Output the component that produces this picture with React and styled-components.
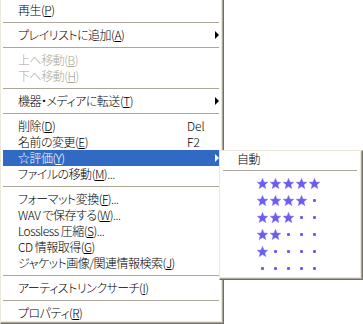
import * as React from 'react';
import styled, { createGlobalStyle, css } from 'styled-components';


const GlobalStyle = createGlobalStyle`
  html, body {
    margin: 0;
    padding: 0;
    background: #ffffff;
  }

  body {
    font-family: "Noto Sans CJK JP", "Noto Sans", sans-serif;
    font-size: 12px;
    font-weight: 300;
    font-feature-settings: "palt";
    letter-spacing: -0.5px;
    color: #000000;
  }
`;

const Page = styled.div`
  position: relative;
  width: 363px;
  height: 324px;
  overflow: hidden;
`;

const Menu = styled.div`
  box-sizing: border-box;
  width: 224px;
  height: 324px;
  display: flex;
  flex-direction: column;
  padding: 2px 4px 2px 2px;
  border-left: 1px solid #ece9d8;
  border-right: 1px solid #716f64;
  border-bottom: 1px solid #716f64;
  background: #ffffff;
  box-shadow: inset -1px -1px 0 #aca899, inset -2px -2px 0 #ece9d8;
`;

const Item = styled.div`
  flex-shrink: 0;
  height: 16px;
  display: flex;
  align-items: center;
  padding-left: 15px;
  line-height: 16px;
  white-space: nowrap;
  color: #000000;

  ${props => props.isDisabled && css`
    color: #aca899;
  `}

  ${props => props.isActive && css`
    background: #316ac5;
    color: #ffffff;
  `}
`;

const Label = styled.span`
  flex: 1;
`;

const Shortcut = styled.span`
  width: 22px;
  letter-spacing: 0;
`;

const ArrowCell = styled.span`
  width: 10px;
  height: 16px;
  display: flex;
  align-items: center;
  padding-left: 6px;
  box-sizing: border-box;
`;

const Arrow = styled.span`
  width: 0;
  height: 0;
  border-top: 4px solid transparent;
  border-bottom: 4px solid transparent;
  border-left: 4px solid currentColor;
`;

const Separator = styled.div`
  flex-shrink: 0;
  height: 9px;
  display: flex;
  flex-direction: column;
  padding-top: 4px;
  box-sizing: border-box;

  &::before {
    content: '';
    display: block;
    height: 1px;
    background: #aca899;
  }

  ${props => props.isInset && css`
    padding-left: 2px;
    padding-right: 2px;
  `}
`;

const SubMenu = styled.div`
  position: absolute;
  left: 219px;
  top: 150px;
  box-sizing: border-box;
  width: 144px;
  display: flex;
  flex-direction: column;
  padding: 1px 3px 2px 1px;
  border-top: 1px solid #ece9d8;
  border-left: 1px solid #ece9d8;
  border-right: 1px solid #716f64;
  border-bottom: 1px solid #716f64;
  background: #ffffff;
  box-shadow: inset -1px -1px 0 #aca899, inset -2px -2px 0 #ece9d8;
`;

const AutoItem = styled.div`
  height: 14px;
  line-height: 14px;
  padding-left: 16px;
`;

const RatingRow = styled.div`
  height: 17px;
  display: flex;
  align-items: center;
  gap: 2px;
  padding-left: 36px;
`;

const Cell = styled.span`
  width: 11px;
  height: 11px;
  display: flex;
  align-items: center;
  justify-content: center;
`;

const Dot = styled.span`
  width: 3px;
  height: 3px;
  border-radius: 1px;
  background: #6b5cf2;
`;


const Star = () => (
  <svg width={ 11 } height={ 11 } viewBox={ '0 0 10 10' }>
    <polygon
      points={ '5,0.2 6.4,3.6 9.95,3.8 7.2,6.1 8.1,9.7 5,7.8 1.9,9.7 2.8,6.1 0.05,3.8 3.6,3.6' }
      fill={ '#6b5cf2' }
      stroke={ '#8f84f6' }
      strokeWidth={ 0.4 }
    />
  </svg>
);

const Mnemonic = ({ text, mark, suffix }) => (
  <React.Fragment>
    { text }(<u>{ mark }</u>){ suffix }
  </React.Fragment>
);

const menuItems = [
  { text: '再生', mark: 'P' },
  { separator: true },
  { text: 'プレイリストに追加', mark: 'A', hasSubmenu: true },
  { separator: true },
  { text: '上へ移動', mark: 'B', isDisabled: true },
  { text: '下へ移動', mark: 'H', isDisabled: true },
  { separator: true },
  { text: '機器・メディアに転送', mark: 'T', hasSubmenu: true },
  { separator: true },
  { text: '削除', mark: 'D', shortcut: 'Del' },
  { text: '名前の変更', mark: 'E', shortcut: 'F2' },
  { text: '☆評価', mark: 'Y', hasSubmenu: true, isActive: true },
  { text: 'ファイルの移動', mark: 'M', suffix: '...' },
  { separator: true },
  { text: 'フォーマット変換', mark: 'F', suffix: '...' },
  { text: 'WAV で保存する', mark: 'W', suffix: '...' },
  { text: 'Lossless 圧縮', mark: 'S', suffix: '...' },
  { text: 'CD 情報取得', mark: 'G' },
  { text: 'ジャケット画像/関連情報検索', mark: 'J' },
  { separator: true },
  { text: 'アーティストリンクサーチ', mark: 'I' },
  { separator: true },
  { text: 'プロパティ', mark: 'R' },
];

const ratings = [5, 4, 3, 2, 1, 0];


export default function App() {
  return (
    <Page>
      <GlobalStyle/>

      <Menu>
        {
          menuItems.map((item, index) => (
            item.separator ?
              <Separator key={ index }/>
              :
              <Item key={ index } isDisabled={ item.isDisabled } isActive={ item.isActive }>
                <Label><Mnemonic text={ item.text } mark={ item.mark } suffix={ item.suffix }/></Label>
                <Shortcut>{ item.shortcut }</Shortcut>
                <ArrowCell>{ item.hasSubmenu && <Arrow/> }</ArrowCell>
              </Item>
          ))
        }
      </Menu>

      <SubMenu>
        <AutoItem>自動</AutoItem>
        <Separator isInset={ true }/>
        {
          ratings.map(rating => (
            <RatingRow key={ rating }>
              {
                [0, 1, 2, 3, 4].map(i => (
                  <Cell key={ i }>{ i < rating ? <Star/> : <Dot/> }</Cell>
                ))
              }
            </RatingRow>
          ))
        }
      </SubMenu>
    </Page>
  );
}
